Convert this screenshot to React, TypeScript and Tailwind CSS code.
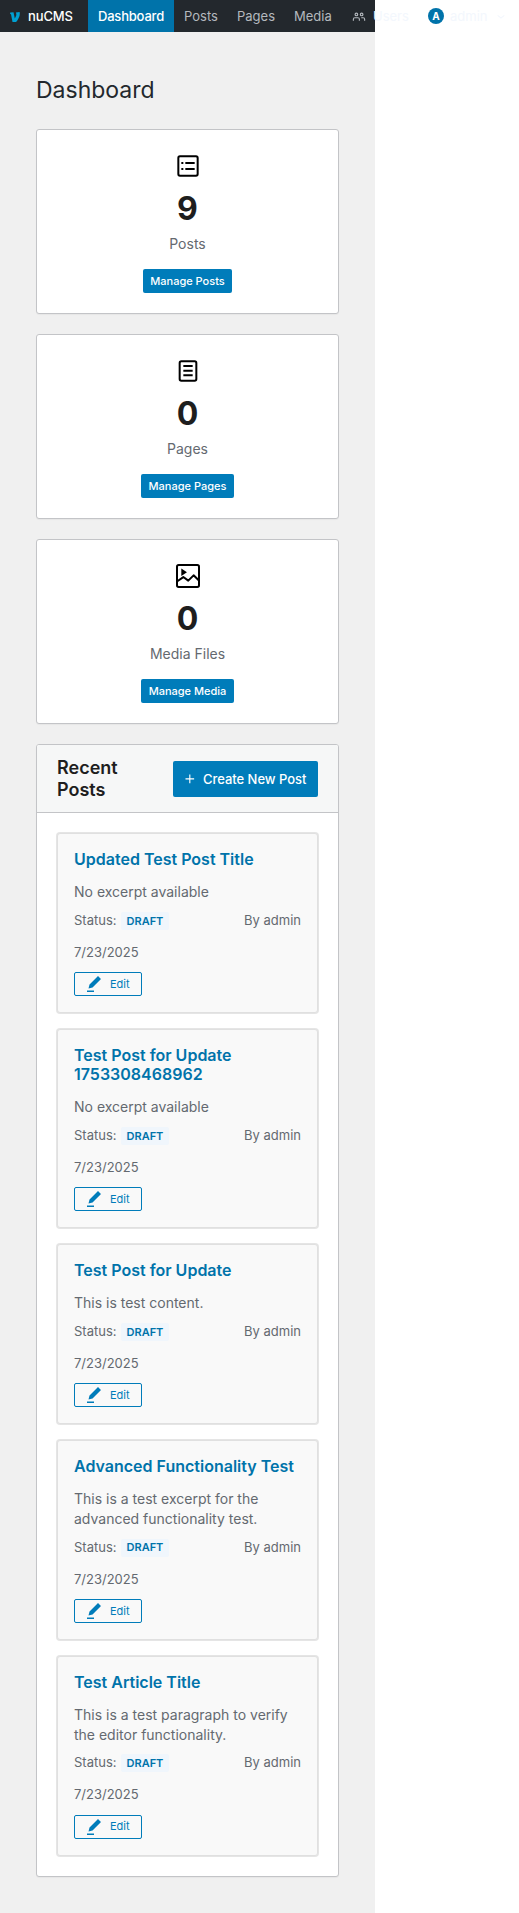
import type { ReactNode } from "react";

const paths = {
  posts: "M18 5.5H6a.5.5 0 0 0-.5.5v12a.5.5 0 0 0 .5.5h12a.5.5 0 0 0 .5-.5V6a.5.5 0 0 0-.5-.5ZM6 4h12a2 2 0 0 1 2 2v12a2 2 0 0 1-2 2H6a2 2 0 0 1-2-2V6a2 2 0 0 1 2-2Zm1 5h1.5v1.5H7V9Zm1.5 4.5H7V15h1.5v-1.5ZM10 9h7v1.5h-7V9Zm7 4.5h-7V15h7v-1.5Z",
  pages: "M15.5 7.5h-7V9h7V7.5Zm-7 3.5h7v1.5h-7V11Zm7 3.5h-7V16h7v-1.5Z M17 4H7a2 2 0 0 0-2 2v12a2 2 0 0 0 2 2h10a2 2 0 0 0 2-2V6a2 2 0 0 0-2-2ZM7 5.5h10a.5.5 0 0 1 .5.5v12a.5.5 0 0 1-.5.5H7a.5.5 0 0 1-.5-.5V6a.5.5 0 0 1 .5-.5Z",
  plus: "M11 12.5V17.5H12.5V12.5H17.5V11H12.5V6H11V11H6V12.5H11Z",
  edit: "m19 7-3-3-8.5 8.5-1 4 4-1L19 7Zm-7 11.5H5V20h7v-1.5Z",
  users: "M15.5 9.5a1 1 0 1 0 0-2 1 1 0 0 0 0 2Zm0 1.5a2.5 2.5 0 1 0 0-5 2.5 2.5 0 0 0 0 5Zm-2.25 6v-2a2.75 2.75 0 0 0-2.75-2.75h-4A2.75 2.75 0 0 0 3.75 15v2h1.5v-2c0-.69.56-1.25 1.25-1.25h4c.69 0 1.25.56 1.25 1.25v2h1.5Zm7-2v2h-1.5v-2c0-.69-.56-1.25-1.25-1.25H15v-1.5h2.5A2.75 2.75 0 0 1 20.25 15ZM9.5 8.5a1 1 0 1 1-2 0 1 1 0 0 1 2 0Zm1.5 0a2.5 2.5 0 1 1-5 0 2.5 2.5 0 0 1 5 0Z",
  chevron: "M17.5 11.6L12 16l-5.5-4.4.9-1.2L12 14l4.5-3.6 1 1.2z",
};

type IconName = keyof typeof paths | "media";

function Icon({ name, className }: { name: IconName; className: string }) {
  if (name === "media") {
    return (
      <svg viewBox="0 0 24 24" fill="none" stroke="currentColor" strokeWidth="1.5" className={className}>
        <rect x="3.75" y="3.75" width="16.5" height="16.5" rx="1.25" />
        <path d="m4 15.9 4.5-3.1 3.7 2.7 4-4 4 3.9" strokeLinejoin="round" />
        <path d="m7 6.4 4.2 2.800-4.200 2.800Z" fill="currentColor" stroke="none" />
      </svg>
    );
  }
  return (
    <svg viewBox="0 0 24 24" fill="currentColor" className={className}>
      <path fillRule="evenodd" clipRule="evenodd" d={paths[name]} />
    </svg>
  );
}

function NavItem({ children, width }: { children: ReactNode; width: string }) {
  return <a className={`flex h-8 shrink-0 items-center pt-px pl-[10px] ${width}`}>{children}</a>;
}

function TopBar() {
  return (
    <header className="flex h-8 items-center bg-[#23282d] text-[13px] whitespace-nowrap text-[#b4b9be]">
      <div className="flex w-[88px] shrink-0 items-center pt-px pl-[10px] font-medium text-white">
        <svg viewBox="0 0 10 10" className="h-[10px] w-[10px] text-[#00a0d2]" fill="currentColor">
          <path d="M.2.6 3.5.2 4.8 6.4C5.9 4.7 6.5 3.3 6.3 2L5.9.6 9.600 0c.9 3.300-1.200 7-3.500 10H2.500L1 2.200.1 2Z" />
        </svg>
        <span className="ml-2 tracking-[-0.01em]">nuCMS</span>
      </div>
      <a className="flex h-8 w-[86px] shrink-0 items-center justify-center bg-[#0073aa] pt-px font-medium tracking-[-0.015em] text-white">Dashboard</a>
      <NavItem width="w-[53px]">Posts</NavItem>
      <NavItem width="w-[57px]">Pages</NavItem>
      <NavItem width="w-[57px]">Media</NavItem>
      <NavItem width="w-[76px]">
        <Icon name="users" className="mr-[5px] -ml-px h-[18px] w-[18px] shrink-0" />
        <span className="text-[#f3f7fd]">Users</span>
      </NavItem>
      <div className="ml-[11px] flex shrink-0 items-center text-[#f3f7fd]">
        <span className="flex h-4 w-4 items-center justify-center rounded-full bg-[#0073aa] text-[10px] font-bold text-white">A</span>
        <span className="ml-1.5 pt-px">admin</span>
        <Icon name="chevron" className="ml-[6px] h-4 w-4" />
      </div>
    </header>
  );
}

interface Stat {
  icon: IconName;
  count: number;
  label: string;
  action: string;
  buttonWidth: string;
}

function StatCard({ icon, count, label, action, buttonWidth }: Stat) {
  return (
    <section className="flex h-[185px] flex-col items-center rounded-[3px] border border-[#c3c4c7] bg-white pt-5 shadow-[0_1px_1px_rgba(0,0,0,0.04)]">
      <Icon name={icon} className="h-8 w-8 text-black" />
      <div className="mt-[11px] text-[32px] leading-8 font-bold text-[#1e1e1e]">{count}</div>
      <div className="mt-[9px] text-[14px] leading-5 text-[#646970]">{label}</div>
      <button className={`mt-[15px] h-6 rounded-[2px] bg-[#007cba] text-[11px] font-medium whitespace-nowrap text-white ${buttonWidth}`}>{action}</button>
    </section>
  );
}

interface Post {
  title: string;
  excerpt: string;
}

const posts: Post[] = [
  { title: "Updated Test Post Title", excerpt: "No excerpt available" },
  { title: "Test Post for Update 1753308468962", excerpt: "No excerpt available" },
  { title: "Test Post for Update", excerpt: "This is test content." },
  { title: "Advanced Functionality Test", excerpt: "This is a test excerpt for the advanced functionality test." },
  { title: "Test Article Title", excerpt: "This is a test paragraph to verify the editor functionality." },
];

function PostCard({ title, excerpt }: Post) {
  return (
    <article className="rounded-[3px] border border-[#e0e0e0] bg-[#f9f9f9] p-4 text-[#646970] shadow-[0_0_0_1px_rgba(0,0,0,0.1)]">
      <h3 className="text-[16px] leading-[19.2px] font-semibold text-[#0073aa]">{title}</h3>
      <p className="mt-[12.8px] text-[14px] leading-[19.6px]">{excerpt}</p>
      <div className="mt-[10px] flex h-[18px] items-center justify-between text-[13px]">
        <span className="flex items-center">
          Status:
          <span className="ml-[4px] flex h-[18px] items-center rounded-[2px] bg-[#f0f6fc] px-1.5 text-[11px] font-semibold text-[#0073aa]">DRAFT</span>
        </span>
        <span>By admin</span>
      </div>
      <div className="mt-[13px] text-[13px] leading-[18px]">7/23/2025</div>
      <button className="mt-[11.4px] flex h-6 w-[68px] items-center rounded-[2px] border border-[#007cba] pl-[7px] text-[11px] text-[#007cba]">
        <Icon name="edit" className="h-6 w-6 shrink-0" />
        <span className="ml-1">Edit</span>
      </button>
    </article>
  );
}

export default function App() {
  return (
    <div className="min-h-screen bg-white font-['Inter',sans-serif] antialiased">
      <div className="flex h-[1913px] w-[375px] flex-col bg-[#f0f0f0]">
        <TopBar />
        <main className="px-9">
          <h1 className="mt-[43px] text-[23px] leading-[30px] text-[#23282d]">Dashboard</h1>
          <div className="mt-6 flex flex-col gap-5">
            <StatCard icon="posts" count={9} label="Posts" action="Manage Posts" buttonWidth="w-[89px]" />
            <StatCard icon="pages" count={0} label="Pages" action="Manage Pages" buttonWidth="w-[93px]" />
            <StatCard icon="media" count={0} label="Media Files" action="Manage Media" buttonWidth="w-[93px]" />
            <section className="overflow-hidden rounded-[3px] border border-[#c3c4c7] bg-white shadow-[0_1px_1px_rgba(0,0,0,0.04)]">
              <div className="flex items-center justify-between border-b border-[#c3c4c7] bg-[#f6f7f7] px-5 py-3">
                <h2 className="w-[80px] text-[18px] leading-[21.6px] font-semibold text-[#1e1e1e]">Recent Posts</h2>
                <button className="flex h-9 w-[145px] items-center rounded-[2px] bg-[#007cba] pl-[7.5px] text-[13px] font-medium whitespace-nowrap text-white">
                  <Icon name="plus" className="h-[18px] w-[18px]" />
                  <span className="ml-[4.5px] pt-0.5 tracking-[-0.003em]">Create New Post</span>
                </button>
              </div>
              <div className="flex flex-col gap-4 p-5">
                {posts.map((post) => (
                  <PostCard key={post.title} {...post} />
                ))}
              </div>
            </section>
          </div>
        </main>
      </div>
    </div>
  );
}
